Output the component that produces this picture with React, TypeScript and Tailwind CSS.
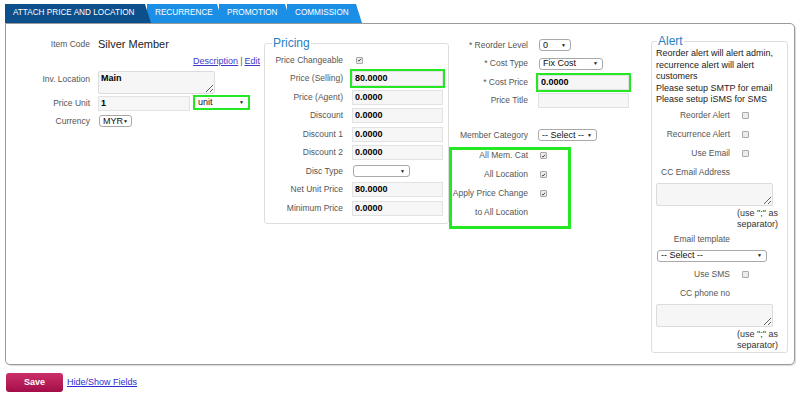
import React from 'react'

const GREEN = 'border-[#25e825]'

function Check({ checked }: { checked?: boolean }) {
  return (
    <span className="inline-flex h-[7px] w-[7px] items-center justify-center rounded-[1px] border border-[#a8a8a8] bg-[#ececec]">
      {checked && (
        <svg viewBox="0 0 8 8" className="h-[6px] w-[6px]">
          <path d="M1.5 4.2 3.2 5.8 6.5 2" fill="none" stroke="#333" strokeWidth="1.4" />
        </svg>
      )}
    </span>
  )
}

function Select({ value, className }: { value: string; className: string }) {
  return (
    <div
      className={`flex items-center justify-between rounded-[3px] border border-[#a9a9a9] bg-white pl-[3px] pr-[4px] text-[9px] leading-none text-[#111] ${className}`}
    >
      <span>{value}</span>
      <span className="text-[5px]">▼</span>
    </div>
  )
}

function Field({ value, hl }: { value: string; hl?: boolean }) {
  return (
    <div className={`flex h-[19px] w-[95px] items-center border-2 ${hl ? GREEN : 'border-transparent'}`}>
      <div className="flex h-[15px] w-full items-center border border-[#e2e2e2] bg-[#f6f6f6] px-[2px] text-[9px] font-bold text-black">
        {value}
      </div>
    </div>
  )
}

function Label({ children, w }: { children: React.ReactNode; w: string }) {
  return <div className={`${w} shrink-0 whitespace-nowrap text-right text-[8.5px] text-[#555]`}>{children}</div>
}

function Area({ value }: { value?: string }) {
  return (
    <textarea
      readOnly
      value={value ?? ''}
      className="block h-[23px] w-[117px] rounded-[2px] border border-[#dcdcdc] bg-[#f6f6f6] px-[2px] pt-[1px] text-[9px] font-bold leading-[11px] text-black outline-none"
    />
  )
}

const tabs = [
  { label: 'ATTACH PRICE AND LOCATION', cls: 'z-[4] w-[146px] bg-[#0d4f8b]' },
  { label: 'RECURRENCE', cls: 'z-[3] -ml-[4px] w-[76px] bg-[#1b8fe6]' },
  { label: 'PROMOTION', cls: 'z-[2] -ml-[4px] w-[72px] bg-[#1b8fe6]' },
  { label: 'COMMISSION', cls: 'z-[1] -ml-[4px] w-[75px] bg-[#1b8fe6]' },
]

export default function App() {
  return (
    <div
      className="h-[393px] w-[800px] overflow-hidden bg-white px-[5px] pt-[4px]"
      style={{ fontFamily: '"Liberation Sans", Arial, sans-serif' }}
    >
      {/* Tabs */}
      <div className="flex h-[19px]">
        {tabs.map((t) => (
          <div
            key={t.label}
            className={`relative flex h-full items-center pl-[8px] text-[8.2px] text-white ${t.cls}`}
            style={{ clipPath: 'polygon(0 0, calc(100% - 6px) 0, 100% 100%, 0 100%)' }}
          >
            {t.label}
          </div>
        ))}
      </div>

      {/* Main panel */}
      <div className="flex h-[342px] w-[790px] items-start rounded-b-[5px] rounded-tr-[5px] border border-[#9a9a9a] shadow-[1px_1px_1px_rgba(0,0,0,0.15)]">
        {/* Column 1 */}
        <div className="flex w-[255px] shrink-0 flex-col pt-[12px]">
          <div className="flex h-[16px] items-center gap-[8px]">
            <Label w="w-[84px]">Item Code</Label>
            <span className="text-[11px] text-[#222]">Silver Member</span>
          </div>
          <div className="mt-[3px] flex h-[14px] items-center justify-end pr-[1px] text-[9px] text-[#555]">
            <span className="text-[#3b3bc8] underline">Description</span>
            <span className="mx-[2px]">|</span>
            <span className="text-[#3b3bc8] underline">Edit</span>
          </div>
          <div className="mt-[2px] flex items-start gap-[8px]">
            <Label w="w-[84px] pt-[2px]">Inv. Location</Label>
            <Area value="Main" />
          </div>
          <div className="mt-[2px] flex h-[15px] items-center gap-[8px]">
            <Label w="w-[84px]">Price Unit</Label>
            <div className="flex items-center gap-[3px]">
              <div className="flex h-[15px] w-[92px] items-center border border-[#e2e2e2] bg-[#f6f6f6] px-[2px] text-[9px] font-bold text-black">
                1
              </div>
              <div className={`-mt-[2px] h-[15px] w-[57px] border-2 ${GREEN}`}>
                <Select value="unit" className="h-full rounded-none border-0" />
              </div>
            </div>
          </div>
          <div className="mt-[4px] flex h-[12px] items-center gap-[9px]">
            <Label w="w-[84px]">Currency</Label>
            <Select value="MYR" className="h-[12px] w-[33px]" />
          </div>
        </div>

        {/* Pricing */}
        <fieldset className="ml-[3px] mt-[13px] w-[185px] shrink-0 rounded-[3px] border border-[#dedede] pb-[5px]">
          <legend className="ml-[7px] px-[1px] text-[12px] leading-[13px] text-[#2980c4]">Pricing</legend>
          <div className="mt-[1px] flex flex-col">
            <div className="flex h-[18.5px] items-center gap-[7px]">
              <Label w="w-[78px]">Price Changeable</Label>
              <span className="ml-[6px] flex">
                <Check checked />
              </span>
            </div>
            {[
              ['Price (Selling)', '80.0000', true],
              ['Price (Agent)', '0.0000'],
              ['Discount', '0.0000'],
              ['Discount 1', '0.0000'],
              ['Discount 2', '0.0000'],
            ].map(([l, v, hl]) => (
              <div key={l as string} className="flex h-[18.5px] items-center gap-[7px]">
                <Label w="w-[78px]">{l}</Label>
                <Field value={v as string} hl={!!hl} />
              </div>
            ))}
            <div className="flex h-[18.5px] items-center gap-[7px]">
              <Label w="w-[78px]">Disc Type</Label>
              <Select value="" className="ml-[3px] h-[12px] w-[57px]" />
            </div>
            {[
              ['Net Unit Price', '80.0000'],
              ['Minimum Price', '0.0000'],
            ].map(([l, v]) => (
              <div key={l} className="flex h-[18.5px] items-center gap-[7px]">
                <Label w="w-[78px]">{l}</Label>
                <Field value={v} />
              </div>
            ))}
          </div>
        </fieldset>

        {/* Column 3 */}
        <div className="flex w-[191px] shrink-0 flex-col pt-[12px]">
          <div className="flex h-[18.5px] items-center gap-[8px]">
            <Label w="w-[79px]">* Reorder Level</Label>
            <Select value="0" className="ml-[3px] h-[12px] w-[32px]" />
          </div>
          <div className="flex h-[18.5px] items-center gap-[8px]">
            <Label w="w-[79px]">* Cost Type</Label>
            <Select value="Fix Cost" className="ml-[3px] h-[12px] w-[64px]" />
          </div>
          <div className="flex h-[18.5px] items-center gap-[8px]">
            <Label w="w-[79px]">* Cost Price</Label>
            <Field value="0.0000" hl />
          </div>
          <div className="flex h-[18.5px] items-center gap-[8px]">
            <Label w="w-[79px]">Price Title</Label>
            <Field value="" />
          </div>
          <div className="h-[16px]" />
          <div className="flex h-[18.5px] items-center gap-[8px]">
            <Label w="w-[79px]">Member Category</Label>
            <Select value="-- Select --" className="ml-[2px] h-[12px] w-[59px]" />
          </div>
          <div className={`mt-[2px] flex w-[122px] flex-col gap-[7px] border-[3px] pb-[7px] ${GREEN}`}>
            {[
              ['All Mem. Cat', true],
              ['All Location', true],
              ['Apply Price Change', true],
              ['to All Location', false],
            ].map(([l, c]) => (
              <div key={l as string} className="flex h-[12px] items-center">
                <Label w="w-[76px]">{l}</Label>
                {c && (
                  <span className="ml-[12px] flex">
                    <Check checked />
                  </span>
                )}
              </div>
            ))}
          </div>
        </div>

        {/* Alert */}
        <fieldset className="ml-[11px] mt-[11px] w-[137px] shrink-0 rounded-[3px] border border-[#dedede] pb-[1px]">
          <legend className="ml-[5px] px-[1px] text-[12px] leading-[13px] text-[#2980c4]">Alert</legend>
          <div className="pl-[4px] text-[9px] leading-[11.5px] text-[#222]">
            <div>Reorder alert will alert admin, recurrence alert will alert customers</div>
            <div>Please setup SMTP for email</div>
            <div>Please setup iSMS for SMS</div>
          </div>
          {['Reorder Alert', 'Recurrence Alert', 'Use Email'].map((l) => (
            <div key={l} className="flex h-[19px] items-center">
              <Label w="w-[78px]">{l}</Label>
              <span className="ml-[12px] flex">
                <Check />
              </span>
            </div>
          ))}
          <div className="flex h-[19px] items-center">
            <Label w="w-[78px]">CC Email Address</Label>
          </div>
          <div className="ml-[4px] mt-[1.5px]">
            <Area />
          </div>
          <div className="mt-[2px] pr-[9px] text-right text-[9px] leading-[11px] text-[#333]">
            (use ";" as
            <br />
            separator)
          </div>
          <div className="flex h-[19px] items-center">
            <Label w="w-[78px]">Email template</Label>
          </div>
          <Select value="-- Select --" className="ml-[5px] mt-[0.5px] h-[12px] w-[110px]" />
          <div className="mt-[3px] flex h-[19px] items-center">
            <Label w="w-[78px]">Use SMS</Label>
            <span className="ml-[12px] flex">
              <Check />
            </span>
          </div>
          <div className="flex h-[19px] items-center">
            <Label w="w-[78px]">CC phone no</Label>
          </div>
          <div className="ml-[4px] mt-[1px]">
            <Area />
          </div>
          <div className="mt-[2px] pr-[9px] text-right text-[9px] leading-[11px] text-[#333]">
            (use ";" as
            <br />
            separator)
          </div>
        </fieldset>
      </div>

      {/* Footer */}
      <div className="mt-[8px] flex items-center gap-[4px] pl-[1px]">
        <button className="h-[19px] w-[57px] rounded-[3px] bg-gradient-to-b from-[#cc2f69] to-[#a30c48] text-[9px] font-bold text-white">
          Save
        </button>
        <span className="text-[9px] text-[#2c2cd0] underline">Hide/Show Fields</span>
      </div>
    </div>
  )
}
